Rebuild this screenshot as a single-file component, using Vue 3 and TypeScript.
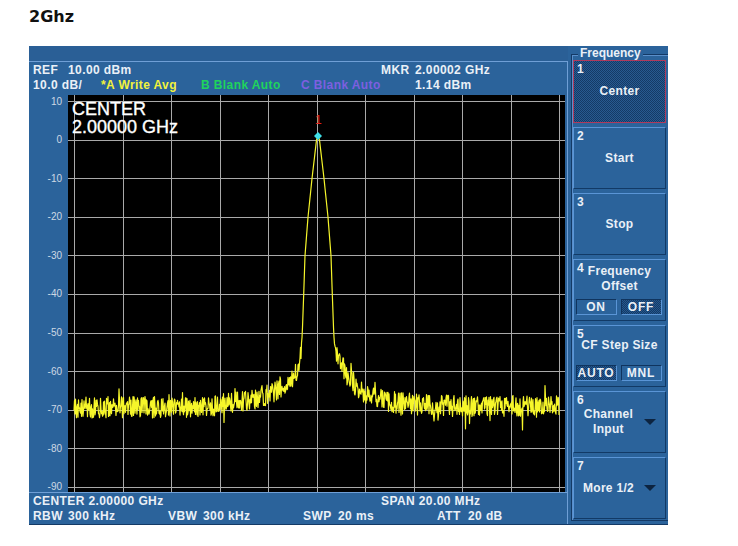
<script setup lang="ts">
interface SoftKey {
  num: number
  lines: string[]
  active?: boolean
  arrow?: boolean
  low?: boolean
  options?: { label: string; on: boolean }[]
}

const keys: SoftKey[] = [
  { num: 1, lines: ['Center'], active: true },
  { num: 2, lines: ['Start'] },
  { num: 3, lines: ['Stop'] },
  {
    num: 4,
    lines: ['Frequency', 'Offset'],
    options: [
      { label: 'ON', on: false },
      { label: 'OFF', on: true },
    ],
  },
  {
    num: 5,
    lines: ['CF Step Size'],
    low: true,
    options: [
      { label: 'AUTO', on: true },
      { label: 'MNL', on: false },
    ],
  },
  { num: 6, lines: ['Channel', 'Input'], arrow: true },
  { num: 7, lines: ['More 1/2'], arrow: true },
]

const levels = [10, 0, -10, -20, -30, -40, -50, -60, -70, -80, -90]

// plot-local coordinates: plot starts at page (68, 95)
const gridX = Array.from({ length: 11 }, (_, i) => 6.5 + Math.round(48.5 * i))
const gridY = levels.map((_, i) => 6.5 + Math.round(38.6 * i))

let seed = 48271
function rnd(): number {
  seed = (seed * 16807) % 2147483647
  return seed / 2147483647
}

// measured skirt of the filter: distance from centre (px) -> level (dB)
const skirt: [number, number][] = [
  [0, 1.14],
  [1.5, 0],
  [6, -10],
  [10, -20],
  [13, -30],
  [14.3, -40],
  [15.7, -50],
  [17, -55],
  [19, -58],
  [30, -120],
]

function mainLobe(d: number): number {
  for (let i = 1; i < skirt.length; i++) {
    if (d <= skirt[i][0]) {
      const [d0, v0] = skirt[i - 1]
      const [d1, v1] = skirt[i]
      return v0 + ((v1 - v0) * (d - d0)) / (d1 - d0)
    }
  }
  return -120
}

function level(x: number): number {
  const d = Math.abs(x - 318)
  const tail =
    x < 318
      ? -69.4 + 17.7 * Math.exp(-d / 31)
      : -69.2 + 32 * Math.exp(-d / 20) + 1.2 * Math.exp(-d / 90)
  return Math.max(mainLobe(d), tail)
}

function toY(db: number): number {
  return 6.5 + (10 - db) * 3.855
}

function buildTrace(): string {
  const pts: string[] = []
  for (let x = 74; x <= 559; x += 0.5) {
    const base = level(x)
    const w = Math.min(1, Math.max(0, (-base - 50) / 8))
    let n = (rnd() - 0.5) * 5.6
    const r = rnd()
    if (r > 0.985) n -= 4 * rnd() + 1.5
    else if (r > 0.97) n += 3 * rnd() + 1
    pts.push(`${(x - 68).toFixed(1)},${toY(base + n * w).toFixed(1)}`)
  }
  return pts.join(' ')
}

const trace = buildTrace()
</script>

<template>
  <div class="page">
    <h1 class="title">2Ghz</h1>
    <div class="instrument">
      <section class="screen">
        <div class="band"></div>
        <div class="info">
          <div class="row row-ref">
            <span>REF</span><span>10.00 dBm</span><span>MKR</span><span>2.00002 GHz</span>
          </div>
          <div class="row row-trace">
            <span>10.0 dB/</span>
            <span class="tr-a">*A Write Avg</span>
            <span class="tr-b">B Blank Auto</span>
            <span class="tr-c">C Blank Auto</span>
            <span>1.14 dBm</span>
          </div>
        </div>
        <div class="plot-row">
          <div class="axis">
            <div v-for="l in levels" :key="l" class="tick">{{ l }}</div>
          </div>
          <div class="plot">
            <svg class="graph" width="497" height="397" viewBox="0 0 497 397">
              <line v-for="x in gridX" :key="'x' + x" :x1="x" :x2="x" y1="0" y2="397" class="grid" />
              <line v-for="y in gridY" :key="'y' + y" x1="0" x2="497" :y1="y" :y2="y" class="grid" />
              <polyline :points="trace" class="trace" />
              <polygon points="250,37 254,41 250,45 246,41" class="marker" />
            </svg>
            <div class="mark-num">1</div>
            <div class="big">
              <div>CENTER</div>
              <div>2.00000 GHz</div>
            </div>
          </div>
        </div>
        <div class="footer">
          <div class="row row-center">
            <span>CENTER 2.00000 GHz</span><span>SPAN 20.00 MHz</span>
          </div>
          <div class="row row-bw">
            <span>RBW</span><span>300 kHz</span><span>VBW</span><span>300 kHz</span>
            <span>SWP</span><span>20 ms</span><span>ATT</span><span>20 dB</span>
          </div>
        </div>
      </section>

      <aside class="menu">
        <div class="legend">Frequency</div>
        <div class="frame">
          <div
            v-for="k in keys"
            :key="k.num"
            class="key"
            :class="{ active: k.active, arrowed: k.arrow, top: k.options, low: k.low }"
          >
            <span class="num">{{ k.num }}</span>
            <div class="label">
              <div v-for="line in k.lines" :key="line">{{ line }}</div>
            </div>
            <i v-if="k.arrow" class="arrow"></i>
            <div v-if="k.options" class="options">
              <span v-for="o in k.options" :key="o.label" class="opt" :class="{ on: o.on }">{{ o.label }}</span>
            </div>
          </div>
        </div>
      </aside>
    </div>
  </div>
</template>

<style>
html,
body {
  margin: 0;
  background: #fff;
}
</style>

<style scoped>
.page {
  width: 738px;
  height: 546px;
  overflow: hidden;
  padding-left: 29px;
  box-sizing: border-box;
  font-family: 'Liberation Sans', Arial, sans-serif;
}
.title {
  margin: 0;
  height: 46px;
  padding-top: 7px;
  box-sizing: border-box;
  font: bold 16px/20px 'DejaVu Sans', sans-serif;
  color: #111;
}
.instrument {
  display: flex;
  width: 639px;
  height: 479px;
  background: #2b639b;
  border-bottom: 1px solid #143a66;
  box-sizing: border-box;
}
.screen {
  width: 539px;
  display: flex;
  flex-direction: column;
  flex: none;
}
.band {
  height: 15px;
  background: #2a5f96;
  border-bottom: 1px solid #6f9fd6;
}
.info {
  height: 33px;
  padding: 1px 0 0 4px;
  box-sizing: border-box;
  border-right: 1px solid #6f9fd6;
}
.row {
  display: grid;
  height: 15px;
  font-size: 12px;
  line-height: 15px;
  font-weight: bold;
  letter-spacing: 0.4px;
  color: #eaf0f7;
  white-space: pre;
}
.row-ref {
  grid-template-columns: 35px 313px 34px 1fr;
}
.row-trace {
  grid-template-columns: 68px 100px 100px 114px 1fr;
}
.row-center {
  grid-template-columns: 348px 1fr;
}
.row-bw {
  grid-template-columns: 35px 100px 35px 100px 35px 99px 31px 1fr;
}
.tr-a {
  color: #f2f23c;
}
.tr-b {
  color: #1fd45c;
}
.tr-c {
  color: #7d5fe0;
}
.plot-row {
  display: flex;
  height: 397px;
  border-right: 1px solid #6f9fd6;
}
.axis {
  width: 39px;
  flex: none;
  margin-top: -12.5px;
  display: flex;
  flex-direction: column;
}
.tick {
  height: 38.6px;
  padding-right: 6px;
  text-align: right;
  font-size: 10px;
  line-height: 38.6px;
  color: #cdd8e4;
}
.plot {
  position: relative;
  width: 497px;
  height: 397px;
  background: #000;
  overflow: hidden;
}
.graph {
  display: block;
}
.grid {
  stroke: #a9a9a9;
  stroke-width: 1;
}
.trace {
  fill: none;
  stroke: #f6f62a;
  stroke-width: 1.2;
  stroke-linejoin: round;
}
.marker {
  fill: #3fe0e8;
}
.mark-num {
  position: absolute;
  left: 247px;
  top: 19px;
  font-size: 12px;
  line-height: 13px;
  color: #e0241c;
}
.big {
  position: absolute;
  left: 4px;
  top: 5px;
  font-size: 18px;
  line-height: 18px;
  color: #fff;
  -webkit-text-stroke: 0.35px #fff;
}
.footer {
  flex: 1;
  padding: 1px 0 0 4px;
  border-top: 1px solid #6f9fd6;
  border-right: 1px solid #6f9fd6;
}
.menu {
  position: relative;
  flex: 1;
  padding: 8px 0 3px 3px;
  box-sizing: border-box;
}
.legend {
  position: absolute;
  left: 10px;
  top: 0;
  padding: 0 2px;
  background: #2b639b;
  font-size: 12px;
  line-height: 14px;
  font-weight: bold;
  color: #eaf0f7;
  z-index: 1;
}
.frame {
  height: 100%;
  box-sizing: border-box;
  padding: 5px 2px 2px 1px;
  border: 1px solid #143a66;
  border-right-width: 0;
  display: flex;
  flex-direction: column;
  gap: 4px;
  box-shadow: inset 1px 1px 0 #5a8fca;
}
.key {
  position: relative;
  height: 62px;
  flex: none;
  box-sizing: border-box;
  display: flex;
  flex-direction: column;
  align-items: center;
  justify-content: center;
  background: #2b639b;
  border: 1px solid;
  border-color: #5a95d6 #123a66 #123a66 #5a95d6;
  font-size: 12px;
  line-height: 15px;
  font-weight: bold;
  letter-spacing: 0.3px;
  color: #eaf0f7;
  text-align: center;
}
.key.active {
  height: 63px;
  border: 1px solid #b03a5c;
  background-color: #1f4d7e;
  background-image: repeating-conic-gradient(#143a66 0 25%, #285a90 0 50%);
  background-size: 2px 2px;
}
.key.top {
  justify-content: flex-start;
  padding-top: 4px;
}
.key.low {
  padding-top: 12px;
}
.key.arrowed .label {
  padding-right: 22px;
}
.num {
  position: absolute;
  left: 3px;
  top: 3px;
  font-size: 12px;
  line-height: 11px;
}
.arrow {
  position: absolute;
  right: 9px;
  top: 50%;
  margin-top: -3px;
  width: 0;
  height: 0;
  border-left: 6px solid transparent;
  border-right: 6px solid transparent;
  border-top: 6px solid #0d2440;
}
.options {
  margin-top: auto;
  margin-bottom: 5px;
  margin-right: 2px;
  display: flex;
  gap: 4px;
}
.opt {
  width: 41px;
  height: 16px;
  box-sizing: border-box;
  border: 1px solid #5a95d6;
  border-color: #10345e #5a95d6 #5a95d6 #10345e;
  background: #2b639b;
  line-height: 14px;
  letter-spacing: 0.8px;
}
.opt.on {
  background-color: #1f4d7e;
  background-image: repeating-conic-gradient(#143a66 0 25%, #25588e 0 50%);
  background-size: 2px 2px;
}
</style>
